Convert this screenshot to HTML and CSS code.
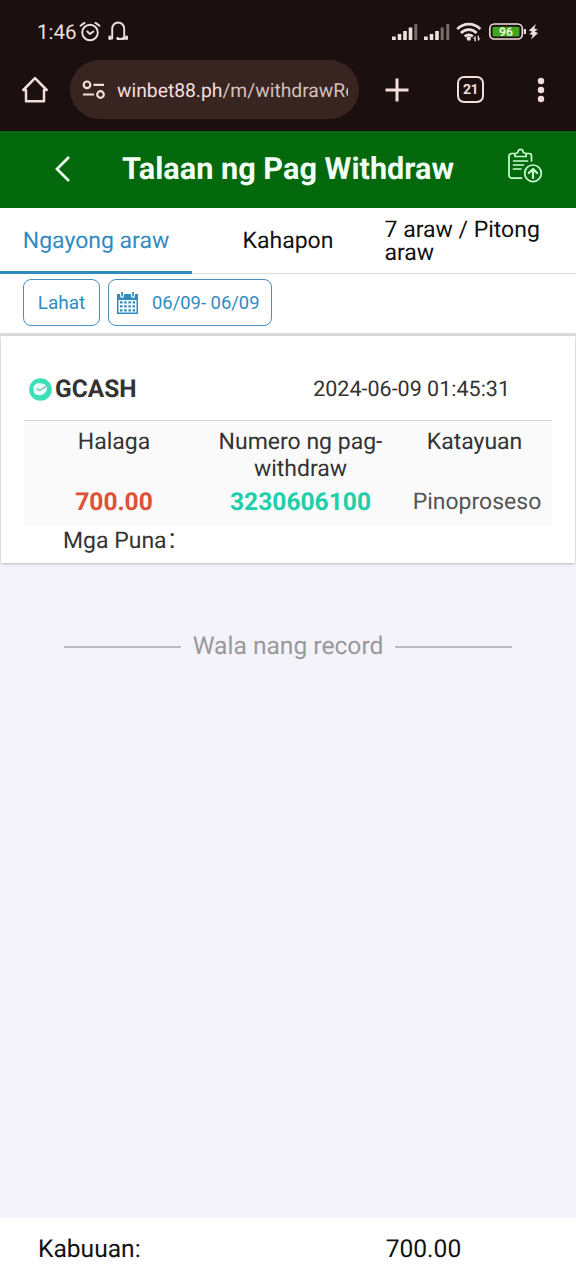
FILE: index.html
```html
<!DOCTYPE html>
<html lang="fil">
<head>
<meta charset="utf-8">
<meta name="viewport" content="width=device-width, initial-scale=1">
<title>Talaan ng Pag Withdraw</title>
<link rel="stylesheet" href="styles.css">
</head>
<body>
<div class="chrome">
  <div class="status">
    <span class="clock">1:46</span>
    <svg class="status-left" width="52" height="24" viewBox="0 0 52 24" fill="none" stroke="#eee0dd" stroke-width="1.9" stroke-linecap="round" stroke-linejoin="round">
      <circle cx="13" cy="12.500" r="7.800"/><path d="M10.300 11.500 13 14 16.300 11.500M3.500 5.700 7.500 2.900M22.500 5.700 18.500 2.900"/>
      <path d="M32.500 18.500h2.700V8.700c0-3.500 2.700-6.200 6-6.200s6 2.700 6 6.200v9.800h2.700M41 19h3l2-.5"/>
      <path d="M32.800 17v1.500M49.600 17v1.500M40.800 18.300v.4M46.300 18.300v.4" stroke-width="2.800"/>
    </svg>
    <svg class="status-right" width="150" height="24" viewBox="0 0 150 24" fill="#eee0dd">
      <path d="M2 16.500h3.800v3.500H2zM7.700 14h3.600v6H7.700zM13.200 11h3.600v9h-3.600zM18.700 7.500h3.600V20h-3.600zM34 16.500h3.800v3.500H34zM39.700 14h3.600v6h-3.600zM45.200 11h3.600v9h-3.600z"/>
      <path d="M24.300 4h3v16h-3zM50.700 7.500h3V20h-3zM56.300 4h3v16h-3z" fill="#796d6b"/>
      <g fill="none" stroke="#eee0dd" stroke-width="2.700"><path d="M67.300 9.200a15.500 15.500 0 0 1 23 0M71 13a10.500 10.500 0 0 1 15.600 0M74.800 16.500a5.700 5.700 0 0 1 8 0"/></g>
      <circle cx="78.800" cy="18.500" r="2.200"/><path d="M85.500 15.700l-2.500 3h1.500v2.500h1.500zM88 21.200l2.500-3H89v-2.500h-1.500z"/>
      <rect x="99.800" y="4" width="32.500" height="15" rx="4.500" fill="none" stroke="#eee0dd" stroke-width="1.600"/>
      <rect x="102.500" y="6.700" width="27" height="9.800" rx="1.500" fill="#41a51d"/>
      <path d="M133.800 9h2.200v5h-2.200z"/><path transform="translate(1.500 0)" d="M144.500 4 137.300 10.500l3.500 1.200-3 2.300 3.300 1-1.500 4.500 7-6.500-3.500-1.200 3-2.300-3.200-1z"/>
      <text class="battery-value" x="116" y="16" text-anchor="middle">96</text>
    </svg>
  </div>
  <div class="toolbar">
    <svg class="home" width="30" height="30" viewBox="0 0 30 30" fill="none" stroke="#f4dedb" stroke-width="2.500" stroke-linejoin="round"><path d="M3.300 15 15 3.200 26.700 15H24v11.300H6V15z"/></svg>
    <div class="address">
      <svg width="24" height="22" viewBox="0 0 24 22" fill="none" stroke="#f4dedb" stroke-width="2.200"><circle cx="6" cy="5.800" r="3.300"/><circle cx="19.500" cy="15.500" r="3.300"/><path d="M12.500 5.800H23M2 15.500h11"/></svg>
      <span class="url">winbet88.ph<span class="path">/m/withdrawRe</span></span>
    </div>
    <svg class="plus" width="26" height="26" viewBox="0 0 26 26" stroke="#f4dedb" stroke-width="3"><path d="M13 1.500v23M1.500 13h23"/></svg>
    <span class="tab-count">21</span>
    <svg class="more" width="8" height="26" viewBox="0 0 8 26" fill="#f4dedb"><circle cx="4" cy="4" r="3.200"/><circle cx="4" cy="13" r="3.200"/><circle cx="4" cy="22" r="3.200"/></svg>
  </div>
</div>
<header class="header">
  <svg class="back" width="18" height="28" viewBox="0 0 18 28" fill="none" stroke="#eafff0" stroke-width="2.700"><path d="M16 2 4 14l12 12"/></svg>
  <h1>Talaan ng Pag Withdraw</h1>
  <svg class="record" width="36" height="36" viewBox="0 0 36 36" fill="none" stroke="#c9ffd0" stroke-width="1.700" stroke-linecap="round" stroke-linejoin="round">
    <path d="M7.500 5.500H5a3 3 0 0 0-3 3v18.700a3 3 0 0 0 3 3h9.500M19.500 5.500H22a2.500 2.500 0 0 1 2.500 2.500v5M8 8.500V6.500q0-1.500 2-1.500 1 0 1-1.200a2.500 2.500 0 0 1 5 0Q16 5 17.500 5q1.700 0 1.700 1.500v2zM6.500 13h14M6.500 17h10M6.500 21h7.500"/><circle cx="26" cy="25.300" r="8.300"/><path d="M26 30v-8.500M21.800 25l4.200-4 4.200 4" stroke-width="2.200"/>
  </svg>
</header>
<nav class="tabs">
  <div class="tab active"><span>Ngayong araw</span></div>
  <div class="tab"><span>Kahapon</span></div>
  <div class="tab week"><span>7 araw / Pitong araw</span></div>
</nav>
<div class="filters">
  <button class="filter all">Lahat</button>
  <button class="filter date">
    <svg width="22" height="24" viewBox="0 0 22 24"><path fill="#318bc1" d="M0 3h3v2q.2 2 2 2t2-2V3h7v2q.2 2 2 2t2-2V3h3v20H0zM4.200 1H6v4.500H4.200zM15.100 1h1.800v4.500h-1.800z"/><path fill="#fff" d="M1.500 9h18v12.500h-18z"/><path d="M3 11.300h15.500M3 15.300h15.500M3 19.300h15.500" stroke="#318bc1" stroke-width="2.300" stroke-dasharray="2.500 1.700"/></svg>
    <span>06/09- 06/09</span>
  </button>
</div>
<main class="content">
  <section class="card">
    <div class="card-head">
      <svg width="24" height="24" viewBox="0 0 24 24"><circle cx="12.500" cy="12.500" r="11.300" fill="#3de0b6"/><path d="M5.500 12c-.5-5 4-6.500 8-5.500 5 .5 6.500 4 5 7-1.500 4-6 5.500-9.500 4.300-2.500-.3-3.500-2.500-3.500-5.800z" fill="#eafff9"/><path d="M8.500 11.500l3 2 7-4.500" fill="none" stroke="#6cb5a4" stroke-width="1.200"/></svg>
      <strong>GCASH</strong>
      <time>2024-06-09 01:45:31</time>
    </div>
    <div class="details">
      <span class="label">Halaga</span><span class="label">Numero ng pag-<br>withdraw</span><span class="label">Katayuan</span>
      <span class="amount">700.00</span><span class="number">3230606100</span><span class="state">Pinoproseso</span>
    </div>
    <div class="note">Mga Puna<span class="colon">:</span></div>
  </section>
  <div class="end"><span>Wala nang record</span></div>
</main>
<footer class="total"><span>Kabuuan:</span><span class="sum">700.00</span></footer>
</body>
</html>
```
FILE: styles.css
```css
* { box-sizing: border-box; }
body { margin: 0; width: 576px; height: 1280px; display: flex; flex-direction: column; overflow: hidden; font-family: Roboto, sans-serif; background: #f4f3fc; color: #333; white-space: nowrap; text-rendering: geometricPrecision; }
svg { display: block; flex: none; }
.chrome { height: 131px; flex: none; background: #1c0f10; color: #eee0dd; }
.status { height: 60px; display: flex; align-items: flex-start; padding: 20px 0 0 37px; }
.clock { width: 40px; padding-top: 1px; font-size: 20.500px; line-height: 24px; }
.status-right { margin-left: 261px; }
.battery-value { font: 700 12px Roboto, sans-serif; fill: #e5ffd9; }
.toolbar { height: 59px; display: flex; align-items: center; padding-left: 20px; }
.address { width: 289px; height: 59px; margin-left: 20px; padding: 0 11px; border-radius: 30px; background: #382522; display: flex; align-items: center; }
.url { width: 231px; margin-left: 12px; padding-top: 2px; overflow: hidden; font-size: 19.300px; line-height: 28px; color: #f4dedb; }
.path { color: #d4c0bc; }
.plus { margin-left: 25px; }
.tab-count { width: 27px; height: 27px; margin-left: 47px; border: 2.500px solid #f4dedb; border-radius: 7px; color: #f4dedb; font-size: 14px; font-weight: 700; letter-spacing: -.5px; line-height: 24px; text-align: center; }
.more { margin-left: 53px; }
.header { height: 77px; flex: none; background: #04680c; display: flex; align-items: center; padding-left: 53px; }
.back { margin-top: -2px; }
.header h1 { width: 334px; margin: 1px 0 0 51px; color: #f1fff4; font-size: 30.700px; font-weight: 700; line-height: 36px; }
.record { margin: -8px 0 0 51px; }
.tabs { height: 66px; flex: none; display: grid; grid-template-columns: repeat(3, 192px); background: #fff; border-bottom: 1px solid #ddd; color: #111; font-size: 23px; line-height: 23px; }
.tab { height: 66px; display: flex; align-items: center; justify-content: center; padding-bottom: 1px; }
.tab.active { color: #318bc1; border-bottom: 3px solid #318bc1; padding-top: 1px; padding-bottom: 0; }
.week { justify-content: flex-start; white-space: normal; padding-right: 20px; padding-left: .5px; }
.filters { height: 62px; flex: none; display: flex; gap: 8px; padding: 5px 23px; background: #fff; border-bottom: 3px solid #ddd; }
.filter { height: 47px; padding: 0; border: 1px solid #4592bd; border-radius: 8px; background: #fff; color: #318bc1; font: 19px/44px Roboto, sans-serif; }
.all { width: 77px; }
.date { width: 164px; display: flex; align-items: center; padding-left: 8px; }
.date span { margin-left: 13px; font-size: 18.400px; }
.content { flex: 1; }
.card { height: 227px; margin: 0 1px; padding: 29px 23px 0; background: #fff; box-shadow: 0 1px 3px #bbb; font-size: 23px; }
.card-head { height: 56px; display: flex; padding: 12px 0 0 4px; border-bottom: 1px solid #d5d5d5; }
.card-head strong { margin-left: 3px; font-size: 24.500px; line-height: 23px; font-weight: 700; }
.card-head time { margin-left: auto; margin-right: 42px; font-size: 21.500px; line-height: 25px; }
.details { display: grid; grid-template-columns: 180px 193px 155px; grid-template-rows: 62px 43px; background: #fafafa; text-align: center; line-height: 27px; }
.label { padding-top: 7px; }
.details > :nth-child(n+4) { padding-top: 5px; }
.details > .amount, .details > .number { padding-top: 6px; font-size: 24.600px; font-weight: 700; }
.amount { color: #dc5137; }
.number { color: #20cfaa; }
.state { color: #555; padding-left: 5px; }
.note { padding: 1px 0 0 39px; line-height: 27px; }
.colon { margin-left: 2px; font-size: 28px; line-height: 20px; }
.end { display: flex; align-items: center; gap: 12px; margin: 68px 64px 0; color: #999; font-size: 24.600px; line-height: 30px; }
.end span { padding-top: 1px; margin-bottom: -1px; }
.end::before, .end::after { content: ""; height: 2px; margin-top: 2px; flex: 1; background: #bbb; }
.total { height: 62px; flex: none; display: flex; padding: 1px 0 0 38px; background: #fff; color: #111; font-size: 24.600px; line-height: 62px; }
.sum { margin-left: 245px; }
```
